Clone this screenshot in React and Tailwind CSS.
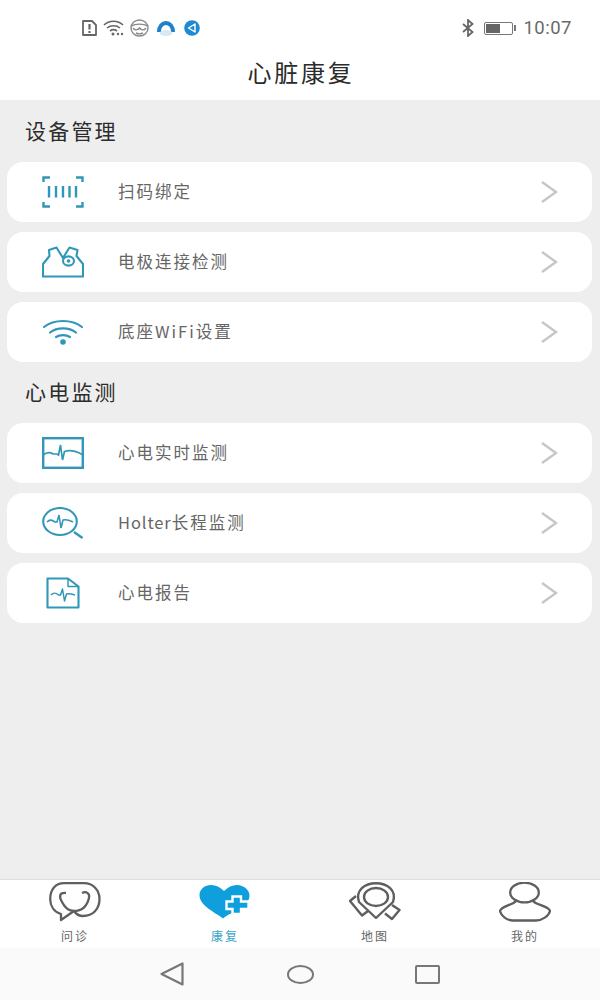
const font = { fontFamily: '"Noto Sans CJK SC", sans-serif' };

const Chevron = () => (
  <svg width="18" height="24" viewBox="0 0 18 24" fill="none" stroke="#c6c6c6" strokeWidth="2.4">
    <path d="M2 2 L16 12 L2 22" />
  </svg>
);

const ScanIcon = () => (
  <svg width="42" height="32" viewBox="0 0 42 32" fill="none" stroke="#3197b8" strokeWidth="2.4">
    <path d="M8 1.5 H1.5 V6 M34 1.5 H40.5 V6 M1.5 26 V30.5 H8 M40.5 26 V30.5 H34" />
    <path d="M7 10 V21.5 M14 10 V21.5 M21 10 V21.5 M27.5 10 V21.5 M34 10 V21.5" strokeWidth="2.4" />
  </svg>
);

const VestIcon = () => (
  <svg width="42" height="32" viewBox="0 0 42 32" fill="none" stroke="#3197b8" strokeWidth="2.1" strokeLinejoin="round">
    <path d="M1 30.5 V18 L7.5 10 L7 4 L14.5 1.5 L21 12 L27.5 1.5 L35.5 4 L34.5 10 L41 18 V30.5 Z" />
    <ellipse cx="26.5" cy="15" rx="5.5" ry="4.6" fill="#fff" />
    <circle cx="26.5" cy="15" r="1.8" fill="#3197b8" stroke="none" />
  </svg>
);

const WifiIcon = () => (
  <svg width="42" height="26" viewBox="0 0 42 26" fill="none" stroke="#3197b8" strokeWidth="2.2" strokeLinecap="round">
    <path d="M2 8 C12 0 30 0 40 8" />
    <path d="M8 13.5 C15 8 27 8 34 13.5" />
    <path d="M14 18 C18 15.5 24 15.5 28 18" />
    <circle cx="21" cy="23" r="2.8" fill="#3197b8" stroke="none" />
  </svg>
);

const EcgBoxIcon = () => (
  <svg width="42" height="32" viewBox="0 0 42 32" fill="none" stroke="#3197b8" strokeWidth="2.4">
    <rect x="1.2" y="1.2" width="39.6" height="29.6" />
    <path d="M1 18 C5 15 8 15 11 17 L15 17 L16.5 18 L18.5 8 L20.5 23 L22.5 14.5 C27 13 34 14 41 18" strokeWidth="1.7" />
  </svg>
);

const HolterIcon = () => (
  <svg width="42" height="32" viewBox="0 0 42 32" fill="none" stroke="#3197b8" strokeWidth="2.1">
    <ellipse cx="18" cy="14.5" rx="16.8" ry="13.5" />
    <path d="M32 25 L40.5 31" strokeWidth="2.4" />
    <path d="M5 15 C8 12 10 13 13 15 L15 15 L17 8 L19 21 L21 13 C24 12 27 13 31 15" strokeWidth="1.6" />
  </svg>
);

const ReportIcon = () => (
  <svg width="34" height="32" viewBox="0 0 34 32" fill="none" stroke="#3197b8" strokeWidth="2.1" strokeLinejoin="round">
    <path d="M1.5 1.5 H22 L32.5 9.5 V30.5 H1.5 Z" />
    <path d="M22 1.5 V9.5 H32.5" strokeWidth="1.5" />
    <path d="M5 18 C8 15 10 16 12.5 18 L14.5 18 L16.5 12 L18.5 24 L20.5 17 C23 16 26 17 29 18" strokeWidth="1.5" />
  </svg>
);

const StethoscopeIcon = () => (
  <svg width="52" height="40" viewBox="0 0 52 40" fill="none" stroke="#5f5f5f" strokeWidth="2.3" strokeLinejoin="round">
    <path d="M15 1.2 H35 C44 1.2 50.5 8 50.5 17 C50.5 27 44 34 34 34 C30 34 27 32 25 29 L12 38 L12 32 C5 30 1.2 24 1.2 17 C1.2 8 6 1.2 15 1.2 Z" />
    <path d="M17 11 C10 10 10 15 13 20 C16 26 20 29 25 29 C33 29 38 24 40 16 C41 11 37 9 33 11" />
  </svg>
);

const HeartPlusIcon = () => (
  <svg width="52" height="40" viewBox="0 0 52 40" fill="none">
    <path d="M24 36.5 C16 30 0.5 24 0.5 13 C0.5 7 6 3 12 3 C17 3 21 5 25 9 C29 5 33 3 38 3 C45 3 50.5 8 50.5 14 C50.5 24 32 30 24 36.5 Z" fill="#0e9fdc" />
    <path d="M33.5 14.5 H42 V19.5 H49.5 V27 H42 V32 H33.5 V27 H27.5 V19.5 H33.5 Z" fill="#0e9fdc" stroke="#fff" strokeWidth="2.4" />
  </svg>
);

const MapPinIcon = () => (
  <svg width="52" height="40" viewBox="0 0 52 40" fill="none" stroke="#5f5f5f" strokeWidth="2.4" strokeLinejoin="round">
    <path d="M27 36 L10 20 C6 8 16 1.2 27 1.2 C38 1.2 48 8 44 20 Z" />
    <ellipse cx="27" cy="15" rx="12" ry="9" />
    <path d="M7 14 L1 19 L13 33.5 L19 29" />
    <path d="M43 23 L50.5 28 L43 37 L36 31.5" />
  </svg>
);

const PersonIcon = () => (
  <svg width="52" height="40" viewBox="0 0 52 40" fill="none" stroke="#5f5f5f" strokeWidth="2.3" strokeLinejoin="round">
    <ellipse cx="25.5" cy="10.5" rx="14.3" ry="9.8" />
    <path d="M17 19 C14 23 2 24 1 29 C2 34 8 38.5 14 38.5 H37 C43 38.5 50 34 51 29 C50 24 37 23 34 19" />
  </svg>
);

const StatusIcons = () => (
  <div className="flex items-center gap-[6px]">
    <svg width="15" height="16" viewBox="0 0 15 16" fill="none" stroke="#666" strokeWidth="1.8" strokeLinejoin="round">
      <path d="M1 1 H10 L14 5 V15 H1 Z" />
      <path d="M7.5 4 V9.5 M7.5 11 V13" strokeWidth="2.2" />
    </svg>
    <svg width="21" height="16" viewBox="0 0 21 16" fill="none" stroke="#666" strokeWidth="1.6">
      <path d="M1 5 C6 0 15 0 20 5" />
      <path d="M4 8 C7.5 5 13.5 5 17 8" />
      <path d="M7 11 C9 9.5 12 9.5 14 11" />
      <circle cx="10" cy="14" r="1.5" fill="#666" stroke="none" />
      <circle cx="15" cy="14" r="1.2" fill="#666" stroke="none" />
      <circle cx="19" cy="14" r="1.2" fill="#666" stroke="none" />
    </svg>
    <svg width="19" height="18" viewBox="0 0 19 18" fill="none" stroke="#8a8a8a" strokeWidth="1.4">
      <ellipse cx="9.5" cy="9" rx="8.5" ry="8" />
      <path d="M1.5 7 C5 4.5 14 4.5 17.5 7 M3 9 C5 12 8 11 9.5 9 C11 11 14 12 16 9 M6 14 C8 15 11 15 13 14" />
    </svg>
    <svg className="ml-[1px]" width="20" height="18" viewBox="0 0 20 18" fill="none">
      <path d="M3 13 C3 1 17 1 17 13" stroke="#1f82c9" strokeWidth="4" />
      <ellipse cx="10" cy="14" rx="6.5" ry="3" fill="#d8e9f5" />
    </svg>
    <svg className="ml-[2px]" width="16" height="16" viewBox="0 0 16 16" fill="none">
      <circle cx="8" cy="8" r="7.8" fill="#1e8ad0" />
      <path d="M11 4 L4.5 8 L11 12 Z" stroke="#fff" strokeWidth="1.4" strokeLinejoin="round" />
    </svg>
  </div>
);

const StatusRight = () => (
  <div className="flex items-center">
    <svg width="12" height="18" viewBox="0 0 12 18" fill="none" stroke="#666" strokeWidth="1.8">
      <path d="M1 5 L10.5 13 L6 17 V1 L10.5 5 L1 13" />
    </svg>
    <div className="ml-[10px] flex items-center">
      <div className="flex h-[13px] w-[29px] rounded-[2px] border border-[#777] p-[1px]">
        <div className="h-full w-[14px] bg-[#666]" />
      </div>
      <div className="ml-[1px] h-[6px] w-[2px] bg-[#777]" />
    </div>
    <span className="ml-[7px] text-[18.5px] leading-none tracking-[0.5px] text-[#6a6a6a]" style={{ fontFamily: "Roboto, sans-serif" }}>
      10:07
    </span>
  </div>
);

const devices = [
  { id: "scan", label: "扫码绑定", icon: <ScanIcon /> },
  { id: "electrode", label: "电极连接检测", icon: <VestIcon /> },
  { id: "wifi", label: "底座WiFi设置", icon: <WifiIcon /> },
];

const monitors = [
  { id: "realtime", label: "心电实时监测", icon: <EcgBoxIcon /> },
  {
    id: "holter",
    label: (
      <>
        <span className="tracking-[0.9px]">Holter</span>长程监测
      </>
    ),
    icon: <HolterIcon />,
  },
  { id: "report", label: "心电报告", icon: <ReportIcon /> },
];

const tabs = [
  { label: "问诊", icon: <StethoscopeIcon /> },
  { label: "康复", icon: <HeartPlusIcon />, active: true },
  { label: "地图", icon: <MapPinIcon /> },
  { label: "我的", icon: <PersonIcon /> },
];

const MenuRow = ({ label, icon }) => (
  <div className="flex h-[60px] items-center rounded-[16px] bg-white pr-[34px]">
    <div className="flex w-[111px] justify-center">{icon}</div>
    <span className="mb-[1px] flex-1 text-[16.5px] tracking-[2px] text-[#666]">{label}</span>
    <Chevron />
  </div>
);

const Section = ({ title, items }) => (
  <section>
    <h2 className="flex h-[61px] items-center pb-[2px] pl-[25px] text-[21px] font-normal tracking-[2.2px] text-[#2c2c2c]">{title}</h2>
    <div className="flex flex-col gap-[10px] pl-[7px] pr-[8px]">
      {items.map((item) => (
        <MenuRow key={item.id} label={item.label} icon={item.icon} />
      ))}
    </div>
  </section>
);

export default function App() {
  return (
    <div className="flex h-[1000px] w-[600px] flex-col overflow-hidden bg-white" style={font}>
      <header className="h-[100px] bg-white">
        <div className="flex h-[54px] items-center justify-between pl-[82px] pr-[28px] pt-[2px]">
          <StatusIcons />
          <StatusRight />
        </div>
        <h1 className="pl-[2px] text-center text-[24px] font-normal leading-[36px] tracking-[2.8px] text-[#2b2b2b]">心脏康复</h1>
      </header>

      <main className="flex flex-1 flex-col bg-[#eeeeee] pt-[1px]">
        <Section title="设备管理" items={devices} />
        <Section title="心电监测" items={monitors} />
      </main>

      <nav className="grid h-[69px] grid-cols-4 border-t border-[#dedede] bg-white pt-[2px]">
        {tabs.map((tab) => (
          <div key={tab.label} className="flex flex-col items-center">
            {tab.icon}
            <span className={`mt-[5px] text-[12px] leading-[18px] tracking-[2px] ${tab.active ? "text-[#3ba5c9]" : "text-[#666]"}`}>
              {tab.label}
            </span>
          </div>
        ))}
      </nav>

      <div className="flex h-[52px] items-center bg-[#fafafa] pl-[160px]">
        <svg width="24" height="24" viewBox="0 0 24 24" fill="none" stroke="#777" strokeWidth="2.2" strokeLinejoin="round">
          <path d="M1.5 12 L22.5 1.5 V22.5 Z" />
        </svg>
        <div className="ml-[103px] h-[19px] w-[27px] rounded-[50%] border-2 border-[#777]" />
        <div className="ml-[101px] h-[19px] w-[25px] rounded-[2px] border-2 border-[#777]" />
      </div>
    </div>
  );
}
